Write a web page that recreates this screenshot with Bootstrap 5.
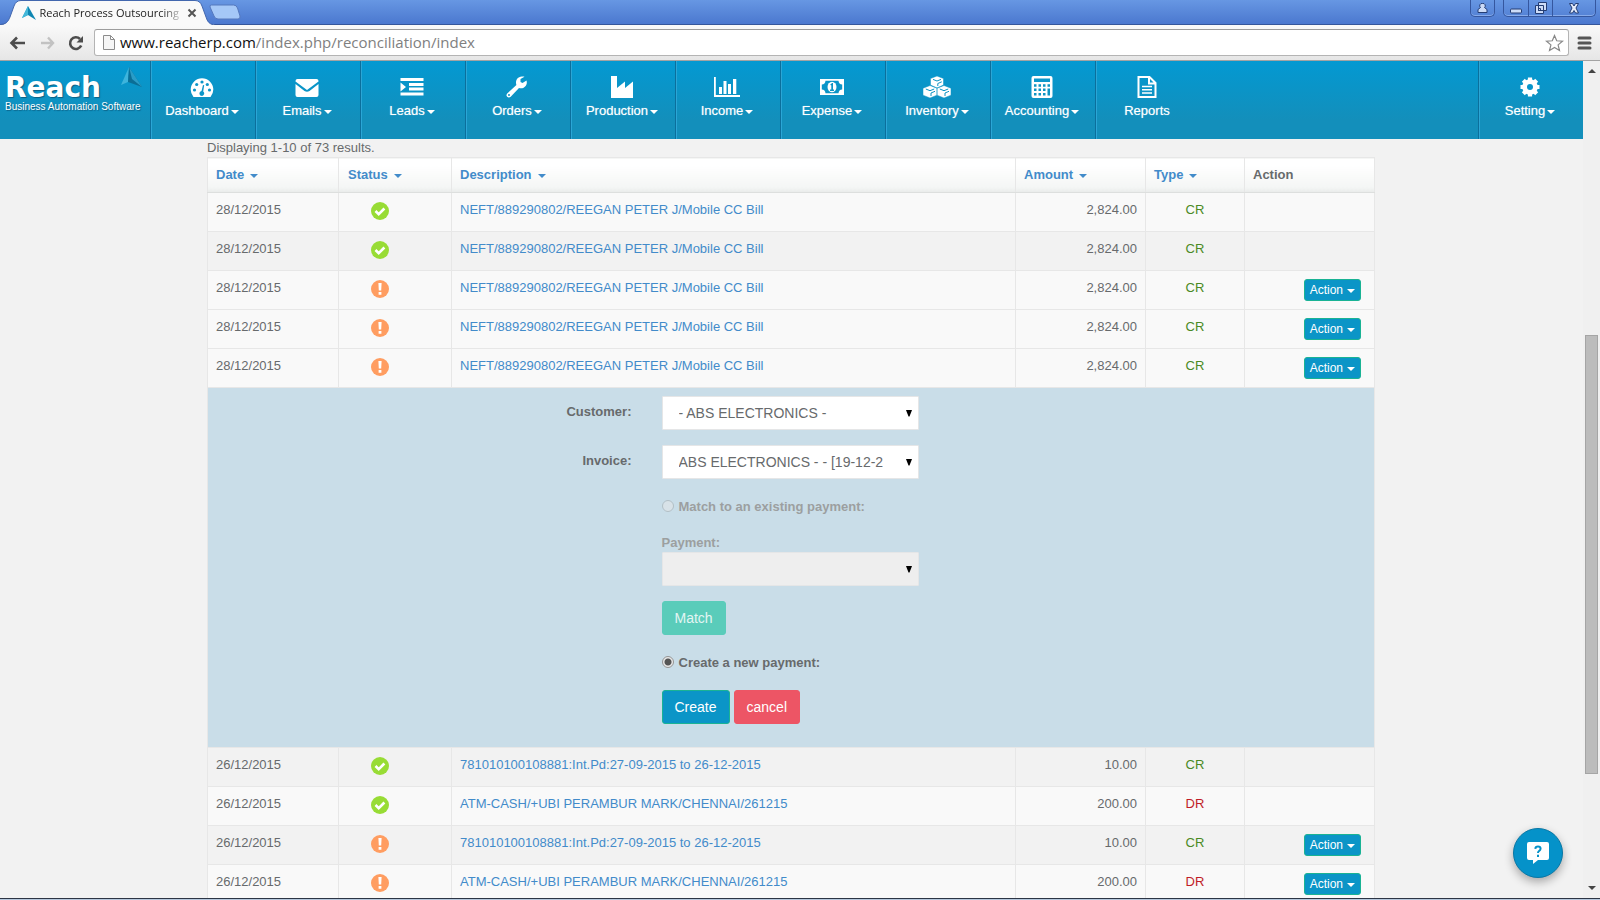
<!DOCTYPE html>
<html lang="en">
<head>
<meta charset="utf-8">
<meta name="viewport" content="width=device-width, initial-scale=1">
<title>Reach Process Outsourcing</title>
<link rel="stylesheet" href="https://cdn.jsdelivr.net/npm/bootstrap@5.3.0/dist/css/bootstrap.min.css">
<style>
body{font-family:"Liberation Sans",Arial,sans-serif;font-size:13px;line-height:18px;color:#676a6c;background:#f2f2f2}
a{text-decoration:none}
/* browser window */
.tabstrip{height:25px;background:linear-gradient(#6797e3,#4b78cf);border-bottom:1px solid #35569b}
.tab-shape{width:209px;height:25px;margin-bottom:-1px}
.tab-shape>svg{position:absolute;left:0;top:0}
.tab-title{position:relative;font-family:"Open Sans","Noto Sans",sans-serif;font-size:11px;color:#222;white-space:nowrap;-webkit-mask-image:linear-gradient(90deg,#000 88%,#0004)}
.bare{border:0;background:none;padding:0;display:flex;align-items:center;justify-content:center}
.win-ctl{border:1px solid #35579f;border-top:0;border-radius:0 0 5px 5px;height:17px;box-shadow:inset 0 -1px #87abea}
.win-ctl>.bare+.bare{border-left:1px solid #35579f}
.toolbar-strip{height:36px;background:linear-gradient(#f9f9f9,#e6e6e6);border-bottom:1px solid #a3a3a3}
.address{height:27px;background:#fff;border:1px solid #b4b4b4;border-top-color:#9c9c9c;border-radius:3px}
.url-text{font-family:"Open Sans","Noto Sans",sans-serif;font-size:15px;color:#808080;line-height:24px;padding-bottom:2px;outline:0;white-space:nowrap}
.url-text b{font-weight:400;color:#111}
/* site menu */
.site-nav{height:78px;background:linear-gradient(#0399d2,#138fbb 75%,#138fbb)}
.brand{width:150px;color:#fff;padding:14px 0 0 5px;text-shadow:1px 1px 1px #0b5f83}
.brand:hover{color:#fff}
.brand-name{font:700 28px/26px "DejaVu Sans",sans-serif}
.brand-tag{font:10px/12px "Liberation Sans",sans-serif;white-space:nowrap}
.brand svg{position:absolute;left:121px;top:5px}
.menu-item{width:105px;color:#fff;padding:15px 2px 0 0;border-left:1px solid #0b6f9c;box-shadow:inset 1px 0 #2ba6d6;text-align:center}
.menu-item:hover{color:#fff}
.menu-item svg{display:block;margin:0 auto 4px}
.menu-item span{text-shadow:0 0 1px #ffffff90}
.arrow::after{content:"";display:inline-block;border:4px solid transparent;border-top-color:currentColor;border-bottom:0;vertical-align:2px;margin-left:2px}
.menu-item .arrow::after{vertical-align:1px}
/* statement grid */
.sheet{max-width:1169px;margin:0 auto;padding-right:1px}
.grid-table{width:100%;table-layout:fixed;border-collapse:collapse}
.grid-table td,.grid-table th{border:1px solid #e7e7e7;padding:8px;height:39px;vertical-align:top}
.grid-table th{height:35px;background:linear-gradient(#fff 20%,#f4f6f5 85%,#e9ebea);border-bottom-color:#dddfde;font-weight:700}
.grid-table a{color:#428bca}
.grid-table th .arrow::after{margin-left:6px;vertical-align:1px}
.c-date{width:131px}.c-status{width:113px}.c-amount{width:130px}.c-type{width:99px}.c-action{width:130px}
.grid-table th:nth-child(2){padding-left:9px}
.grid-table td:nth-child(2){padding-left:32px}
.grid-table td:nth-child(4){text-align:right}
.grid-table td:nth-child(5){text-align:center;color:#4a8a24}
.grid-table td:nth-child(5).debit{color:#c01c28}
.grid-table td:nth-child(6){text-align:right;padding-right:13px}
.light-row{background:#f9f9f9}
.state{display:block;width:18px;height:18px;margin-top:1px}
.btn{line-height:20px;font-size:14px;padding:6px 12px;border-radius:3px}
.btn-main{background:#0b95c7;border-color:#1ab394;color:#fff}
.btn-main:hover{background:#087ba6;color:#fff}
.btn-stop{background:#ed5565;border-color:#ed5565;color:#fff}
.btn-match,.btn-match:disabled{background:#5accba;border-color:#5accba;color:#e3f5f3;opacity:1}
.btn.btn-row{font-size:12px;line-height:18px;padding:1px 5px;display:block;margin-left:auto}
.btn-row.arrow::after{margin-left:4px;vertical-align:1px}
/* reconcile form */
.grid-table td.form-cell{background:#c9dde8;padding:8px 2px 23px 0;text-align:left}
.match-form{display:grid;grid-template-columns:1fr 257px 1fr;column-gap:30px;row-gap:15px;font-weight:700}
.match-form>label{text-align:right;padding-top:7px}
.form-select{height:34px;font-size:14px;line-height:20px;padding:6px 30px 6px 16px;border:1px solid #e5e6e7;border-radius:1px;color:#676a6c;background-color:#fff;background-position:right 6px center;background-size:6px 7px;background-image:url("data:image/svg+xml,%3Csvg xmlns='http://www.w3.org/2000/svg' viewBox='0 0 6 7'%3E%3Cpath d='M0 0h6L3.5 6.500h-1z'/%3E%3C/svg%3E")}
.form-select:disabled{background-color:#eee}
.options{grid-column:2}
.dim{color:#9c9fa0}
.pay-block{margin:18px 0 15px}
.new-block{margin:15px 0 18px}
.form-check-input{width:12px;height:12px;margin:0 5px 4px 0;float:none;vertical-align:middle;border-color:#9aa0a3;background:#e8e8e8}
.form-check-input:checked{background:radial-gradient(#555 0 3px,#e8e8e8 4px);border-color:#949494}
/* floating help + scroll bar */
.help{position:absolute;right:37px;bottom:20px;width:50px;height:50px;border-radius:50%;background:#0592c9;border:1px solid #0877a5;box-shadow:0 4px 10px #00000050}
.scroller{width:17px;background:#f0f0f0}
.scroller i{flex:264 0 0}
.scroller i:last-of-type{flex-grow:113}
.thumb{flex:440 0 0;width:13px;background:#bcbcbc;border:1px solid #a5a5a5}
.taskbar-edge{height:2px;background:#b5c7dc;border-top:1px solid #2c3544}
</style>
</head>
<body>
<svg class="d-none">
<symbol id="ok" viewBox="0 0 18 18"><circle cx="9" cy="9" r="9" fill="#98dc35"/><path d="M4.500 9l3.200 3.200 5.700-5.700" fill="none" stroke="#fff" stroke-width="2.600"/></symbol>
<symbol id="warn" viewBox="0 0 18 18"><circle cx="9" cy="9" r="9" fill="#ff9d61"/><path d="M7.400 3h3.200l-.4 7.500H7.800zM7.600 12h2.800v2.700H7.600z" fill="#fff"/></symbol>
</svg>
<div class="vh-100 d-flex flex-column overflow-hidden">

<header>
<div class="tabstrip d-flex justify-content-between">
  <div class="d-flex">
    <div class="tab-shape position-relative d-flex align-items-center">
      <svg width="215" height="25"><path d="M0 25C6 25 8 22 10 17L14 6Q16 .5 21 .5H195Q200 .5 202 6L206 17Q208 25 215 25z" fill="#f9f9f9"/><path d="M0 24.500C6 24 8 22 10 17L14 6Q16 .5 21 .5H195Q200 .5 202 6L206 17Q208 24 213 24.500" fill="none" stroke="#4267ae"/><path d="M28 6l-6 12 6-3z" fill="#1b9cc4"/><path d="M28 6v9l8 5z" fill="#0e86b2"/><path d="M28 6v9l-6 3z" fill="#43b8d9"/></svg>
      <span class="tab-title ms-auto">Reach Process Outsourcing</span>
      <button class="bare position-relative ms-2 me-2 pe-1" aria-label="Close tab"><svg width="10" height="10"><path d="M1.500 1.500l7 7m0-7l-7 7" stroke="#555" stroke-width="2"/></svg></button>
    </div>
    <button class="bare align-self-center" aria-label="New tab"><svg width="32" height="16"><path d="M2.500 1h22q3 0 4 3l2.500 8q.5 3-2 3H9Q6 15 5 12L1 3Q.5 1 2.500 1z" fill="#a5c8f7" stroke="#5578bd"/></svg></button>
  </div>
  <div class="d-flex gap-2 me-1">
    <div class="win-ctl d-flex"><button class="bare px-1" aria-label="User"><svg width="15" height="14"><path d="M7.500 2.500a2.300 2.300 0 012 4l2.500 2v3H3v-3l2.500-2a2.300 2.300 0 012-4z" fill="#cddcf7" stroke="#243d73"/></svg></button></div>
    <div class="win-ctl d-flex"><button class="bare px-1" aria-label="Minimize"><svg width="16" height="14"><rect x="2.500" y="8" width="11" height="4" rx="1" fill="#cddcf7" stroke="#243d73"/></svg></button><button class="bare px-1" aria-label="Restore"><svg width="15" height="14"><path d="M5.500 1.500h8v8h-8z M2.500 4.500h8v8h-8zM5.500 7.500h2v2h-2z" fill="#cddcf7" stroke="#243d73"/></svg></button><button class="bare px-3" aria-label="Close"><svg width="10" height="12"><path d="M.5 1.500h3L5 4l1.500-2.500h3L7 6l2.500 5h-3L5 8.500 3.500 11h-3L3 6z" fill="#e4ecfb" stroke="#243d73"/></svg></button></div>
  </div>
</div>
<div class="toolbar-strip d-flex align-items-center ps-2 pe-2">
  <button class="bare me-3" aria-label="Back"><svg width="17" height="14"><path d="M17 7H3M9 1.500L3.500 7 9 12.500" fill="none" stroke="#4d4d4d" stroke-width="2.600"/></svg></button>
  <button class="bare me-2 pe-1" aria-label="Forward"><svg width="15" height="14"><path d="M0 7h12M7 1.500L12 7 7 12.500" fill="none" stroke="#c2c2c2" stroke-width="2.400"/></svg></button>
  <button class="bare" aria-label="Reload"><svg width="18" height="16"><path d="M13.200 10.500A5.800 5.800 0 1112 4" fill="none" stroke="#4d4d4d" stroke-width="2.600"/><path d="M15 1v6.500H8.500z" fill="#4d4d4d"/></svg></button>
  <div class="address d-flex align-items-center flex-grow-1 ms-2 me-2 px-1">
    <svg class="ms-1" width="13" height="17"><path d="M.5 1.500h7l4 4v10H.5zM7.500 1.500v4h4" fill="#f6f6f6" stroke="#8c8c8c"/></svg>
    <div class="url-text flex-grow-1 ps-1" contenteditable="true" role="textbox" aria-label="Address"><b>www.reacherp.com</b>/index.php/reconciliation/index</div>
    <button class="bare" aria-label="Bookmark"><svg width="19" height="18"><path d="M9.500 1.500l2.200 5.300 5.800.4-4.400 3.700 1.400 5.600-5-3-5 3 1.400-5.600-4.400-3.700 5.800-.4z" fill="#fff" stroke="#888" stroke-width="1.200"/></svg></button>
  </div>
  <button class="bare" aria-label="Menu"><svg width="15" height="14"><path d="M2 2h11M2 7h11M2 12h11" stroke="#555" stroke-width="3" stroke-linecap="round"/></svg></button>
</div>
</header>

<div class="d-flex flex-grow-1 overflow-hidden position-relative">
<div class="flex-grow-1 overflow-hidden">
<nav class="site-nav d-flex">
  <a href="#" class="brand position-relative"><div class="brand-name">Reach</div><div class="brand-tag">Business Automation Software</div>
    <svg width="24" height="24"><path d="M8 1L0 19l7-3z" fill="#3eb4dc"/><path d="M8 1l-1 15 14 5z" fill="#0b6e96"/><path d="M8 1l3 12 10 8z" fill="#2a9cc7"/></svg></a>
  <a href="#" class="menu-item"><svg width="24" height="22" viewBox="0 0 24 22"><path d="M3.500 21A11.300 11.300 0 1120.500 21z" fill="#fff"/><g fill="#0d96c9"><circle cx="4.500" cy="14" r="1.600"/><circle cx="6.700" cy="8.500" r="1.600"/><circle cx="12" cy="6" r="1.600"/><circle cx="17.300" cy="8.500" r="1.600"/><circle cx="19.500" cy="14" r="1.600"/><path d="M13 9l1.200.3-1 6.200a2.400 2.400 0 11-1.700-.4z"/></g></svg><span class="arrow">Dashboard</span></a>
  <a href="#" class="menu-item"><svg width="24" height="22" viewBox="0 0 24 22"><path d="M.5 5.500V5q0-2 2-2h19q2 0 2 2v.5L12 14zM.5 8l9 7q2.500 1.500 5 0l9-7v11q0 2-2 2h-19q-2 0-2-2z" fill="#fff"/></svg><span class="arrow">Emails</span></a>
  <a href="#" class="menu-item"><svg width="24" height="22" viewBox="0 0 24 22"><path d="M.5 2h23v3H.5zM9 7h14.500v3H9zM9 11.500h14.500v3H9zM.5 16.500h23v3H.5zM.5 6.500L6 11 .5 15.500z" fill="#fff"/></svg><span class="arrow">Leads</span></a>
  <a href="#" class="menu-item"><svg width="24" height="22" viewBox="0 0 24 22"><path d="M21.500 4.500l-4 2.500-2-1V3l4-2.300C15 .2 11.500 2 11 6q-.1 1.500.4 3L2.200 17.500q-1.500 1.800 0 3.300t3.500 0L14 12c5 1.500 9-3 7.500-7.500zM4 18a1 1 0 110 2 1 1 0 010-2z" fill="#fff" fill-rule="evenodd"/></svg><span class="arrow">Orders</span></a>
  <a href="#" class="menu-item"><svg width="24" height="22" viewBox="0 0 24 22"><path d="M1 22V0h6v12l8-6.500V12l8-6.500V22z" fill="#fff"/></svg><span class="arrow">Production</span></a>
  <a href="#" class="menu-item"><svg width="26" height="22" viewBox="0 0 26 22"><path d="M0 1h1.800v18H26v2H0zM5 11h3v7H5zM9.500 5h3v13h-3zM14 8h3v10h-3zM19 3h3.300v15H19z" fill="#fff"/></svg><span class="arrow">Income</span></a>
  <a href="#" class="menu-item"><svg width="24" height="22" viewBox="0 0 24 22"><path fill-rule="evenodd" d="M0 3h24v16H0zM5.500 4.800a4 4 0 01-3.700 3.700v5a4 4 0 013.700 3.700h13a4 4 0 013.700-3.700v-5a4 4 0 01-3.700-3.700z" fill="#fff"/><ellipse cx="12" cy="11" rx="4.500" ry="5.200" fill="#fff"/><path d="M10 9l2-2h1v6.500h1V15h-4v-1.500h1.300V9.300z" fill="#0d94c4"/></svg><span class="arrow">Expense</span></a>
  <a href="#" class="menu-item"><svg width="28" height="22" viewBox="0 0 28 22"><g fill="#fff" stroke="#0d94c4" stroke-width=".5"><path d="M14 0l6.500 2.500v6.500L14 12 7.500 9V2.500zM7 9.500l7 2.700v7L7 22l-7-2.800v-7zM21 9.500l7 2.700v7L21 22l-7-2.800v-7z"/></g><path d="M10 3.400L14 5l4-1.600M14.800 10V7.500l4-1.700M2.800 13L7 14.700l4.200-1.700M8 20V17l4-1.700M16.800 13l4.200 1.700 4.200-1.700M22 20V17l4-1.700" fill="none" stroke="#0d94c4" stroke-width="1"/></svg><span class="arrow">Inventory</span></a>
  <a href="#" class="menu-item"><svg width="22" height="22" viewBox="0 0 22 22"><rect x=".5" width="21" height="22" rx="2" fill="#fff"/><path d="M3 2.500h16v3.500H3z" fill="#0d97cb"/><path d="M3 9.500h16M3 13.800h12M3 18.300h12" stroke="#0d94c4" stroke-width="2.400" stroke-dasharray="2.500 2"/><path d="M16.500 12.500H19v7h-2.500z" fill="#0d94c4"/></svg><span class="arrow">Accounting</span></a>
  <a href="#" class="menu-item"><svg width="20" height="22" viewBox="0 0 20 22"><path d="M1.500 1h11l6 6v14h-17zM12 1v6.500h6.500" fill="none" stroke="#fff" stroke-width="2"/><path d="M5 10.500h10M5 13.800h10M5 17h10" stroke="#fff" stroke-width="1.500"/></svg><span>Reports</span></a>
  <a href="#" class="menu-item ms-auto"><svg width="22" height="22" viewBox="0 0 22 22"><circle cx="11" cy="11" r="5.400" fill="none" stroke="#fff" stroke-width="4.800"/><path d="M11 1.500v19M1.500 11h19M4.300 4.300l13.400 13.400M17.700 4.300L4.300 17.700" stroke="#fff" stroke-width="4.200"/><circle cx="11" cy="11" r="3" fill="#0795cb"/></svg><span class="arrow">Setting</span></a>
</nav>
<main class="sheet">
<div>Displaying 1-10 of 73 results.</div>
<table class="grid-table">
<colgroup><col class="c-date"><col class="c-status"><col><col class="c-amount"><col class="c-type"><col class="c-action"></colgroup>
<thead><tr><th><a href="#" class="arrow">Date</a></th><th><a href="#" class="arrow">Status</a></th><th><a href="#" class="arrow">Description</a></th><th><a href="#" class="arrow">Amount</a></th><th><a href="#" class="arrow">Type</a></th><th>Action</th></tr></thead>
<tbody>
<tr class="light-row"><td>28/12/2015</td><td><svg class="state"><use href="#ok"/></svg></td><td><a href="#">NEFT/889290802/REEGAN PETER J/Mobile CC Bill</a></td><td>2,824.00</td><td>CR</td><td></td></tr>
<tr><td>28/12/2015</td><td><svg class="state"><use href="#ok"/></svg></td><td><a href="#">NEFT/889290802/REEGAN PETER J/Mobile CC Bill</a></td><td>2,824.00</td><td>CR</td><td></td></tr>
<tr class="light-row"><td>28/12/2015</td><td><svg class="state"><use href="#warn"/></svg></td><td><a href="#">NEFT/889290802/REEGAN PETER J/Mobile CC Bill</a></td><td>2,824.00</td><td>CR</td><td><button class="btn btn-main btn-row arrow">Action</button></td></tr>
<tr class="light-row"><td>28/12/2015</td><td><svg class="state"><use href="#warn"/></svg></td><td><a href="#">NEFT/889290802/REEGAN PETER J/Mobile CC Bill</a></td><td>2,824.00</td><td>CR</td><td><button class="btn btn-main btn-row arrow">Action</button></td></tr>
<tr class="light-row"><td>28/12/2015</td><td><svg class="state"><use href="#warn"/></svg></td><td><a href="#">NEFT/889290802/REEGAN PETER J/Mobile CC Bill</a></td><td>2,824.00</td><td>CR</td><td><button class="btn btn-main btn-row arrow">Action</button></td></tr>
<tr><td colspan="6" class="form-cell">
  <form class="match-form">
    <label for="customer">Customer:</label>
    <select id="customer" class="form-select"><option>- ABS ELECTRONICS -</option></select><span></span>
    <label for="invoice">Invoice:</label>
    <select id="invoice" class="form-select"><option>ABS ELECTRONICS - - [19-12-2</option></select>
    <div class="options">
      <div class="dim pt-1"><input class="form-check-input" type="radio" name="mode" id="existing" disabled><label for="existing">Match to an existing payment:</label></div>
      <div class="pay-block">
        <label for="payment" class="dim d-block">Payment:</label>
        <select id="payment" class="form-select" disabled><option></option></select>
      </div>
      <button type="button" class="btn btn-match" disabled>Match</button>
      <div class="new-block pt-1"><input class="form-check-input" type="radio" name="mode" id="fresh" checked><label for="fresh">Create a new payment:</label></div>
      <div class="d-flex gap-1"><button type="button" class="btn btn-main">Create</button><button type="button" class="btn btn-stop">cancel</button></div>
    </div>
  </form>
</td></tr>
<tr><td>26/12/2015</td><td><svg class="state"><use href="#ok"/></svg></td><td><a href="#">781010100108881:Int.Pd:27-09-2015 to 26-12-2015</a></td><td>10.00</td><td>CR</td><td></td></tr>
<tr class="light-row"><td>26/12/2015</td><td><svg class="state"><use href="#ok"/></svg></td><td><a href="#">ATM-CASH/+UBI PERAMBUR MARK/CHENNAI/261215</a></td><td>200.00</td><td class="debit">DR</td><td></td></tr>
<tr><td>26/12/2015</td><td><svg class="state"><use href="#warn"/></svg></td><td><a href="#">781010100108881:Int.Pd:27-09-2015 to 26-12-2015</a></td><td>10.00</td><td>CR</td><td><button class="btn btn-main btn-row arrow">Action</button></td></tr>
<tr class="light-row"><td>26/12/2015</td><td><svg class="state"><use href="#warn"/></svg></td><td><a href="#">ATM-CASH/+UBI PERAMBUR MARK/CHENNAI/261215</a></td><td>200.00</td><td class="debit">DR</td><td><button class="btn btn-main btn-row arrow">Action</button></td></tr>
</tbody>
</table>
</main>
</div>
<button class="help bare" aria-label="Help"><svg width="22" height="22" viewBox="0 0 22 22"><path d="M2 0h18q2 0 2 2v14q0 2-2 2h-9l-5 4v-4H2q-2 0-2-2V2q0-2 2-2z" fill="#fff"/><path d="M8.300 6.800Q8.500 4.500 11 4.500t2.600 2.300Q13.500 8.300 12 9q-1 .7-1 2M11 12.800v2.200" fill="none" stroke="#0592c9" stroke-width="2"/></svg></button>
<div class="scroller d-flex flex-column align-items-center py-2"><svg width="8" height="4"><path d="M0 4l4-4 4 4z" fill="#444"/></svg><i></i><div class="thumb"></div><i></i><svg width="8" height="4"><path d="M0 0l4 4 4-4z" fill="#444"/></svg></div>
</div>
<footer class="taskbar-edge"></footer>
</div>
<script src="https://cdn.jsdelivr.net/npm/bootstrap@5.3.0/dist/js/bootstrap.bundle.min.js"></script>
</body>
</html>
